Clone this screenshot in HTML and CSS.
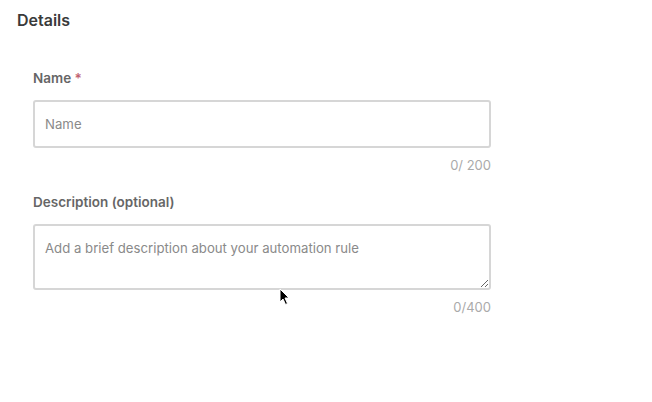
FILE: index.html
```html
<!DOCTYPE html>
<html>
<head>
<meta charset="utf-8">
<link rel="stylesheet" href="styles.css">
</head>
<body>
<div class="panel">
  <h2 class="title">Details</h2>
  <form class="form">
    <div class="field">
      <label class="label">Name <span class="req">*</span></label>
      <input class="input" type="text" placeholder="Name">
      <div class="count">0/ 200</div>
    </div>
    <div class="field">
      <label class="label">Description (optional)</label>
      <textarea class="textarea" placeholder="Add a brief description about your automation rule"></textarea>
      <div class="count">0/400</div>
    </div>
  </form>
  <svg class="cursor" width="12" height="18" viewBox="0 0 12 18"><path d="M1 1 L1 14 L4 11 L6.5 16.5 L8.5 15.5 L6 10 L10 10 Z" fill="#000" stroke="#fff" stroke-width="1"/></svg>
</div>
</body>
</html>
```
FILE: styles.css
```css
* { box-sizing: border-box; }
html, body { margin: 0; padding: 0; background: #fff; }
body { font-family: Inter, "Noto Sans", sans-serif; width: 652px; height: 402px; overflow: hidden; }
.panel { position: relative; padding: 10px 17px 0 17px; height: 402px; }
.title { margin: 0; font-size: 16px; font-weight: 600; color: #3a3a3a; line-height: 21px; }
.form { padding: 38px 0 0 16px; width: 474px; display: flex; flex-direction: column; gap: 20px; }
.field { display: flex; flex-direction: column; }
.label { font-size: 13.5px; font-weight: 600; color: #666; line-height: 18px; margin-bottom: 13px; }
.req { color: #c0606e; }
.input, .textarea { width: 458px; border: 2px solid #d6d6d6; border-radius: 3px; font-family: inherit; font-size: 13.2px; color: #333; background: #fff; outline: none; }
.input { height: 48px; padding: 0 10px; }
.textarea { height: 66px; padding: 12px 10px; resize: vertical; line-height: 20px; display: block; }
.input::placeholder, .textarea::placeholder { color: #8a8a8a; }
.count { font-size: 13px; color: #aaa; text-align: right; width: 458px; margin-top: 9px; line-height: 16px; }
.cursor { position: absolute; left: 279px; top: 288px; }
```
